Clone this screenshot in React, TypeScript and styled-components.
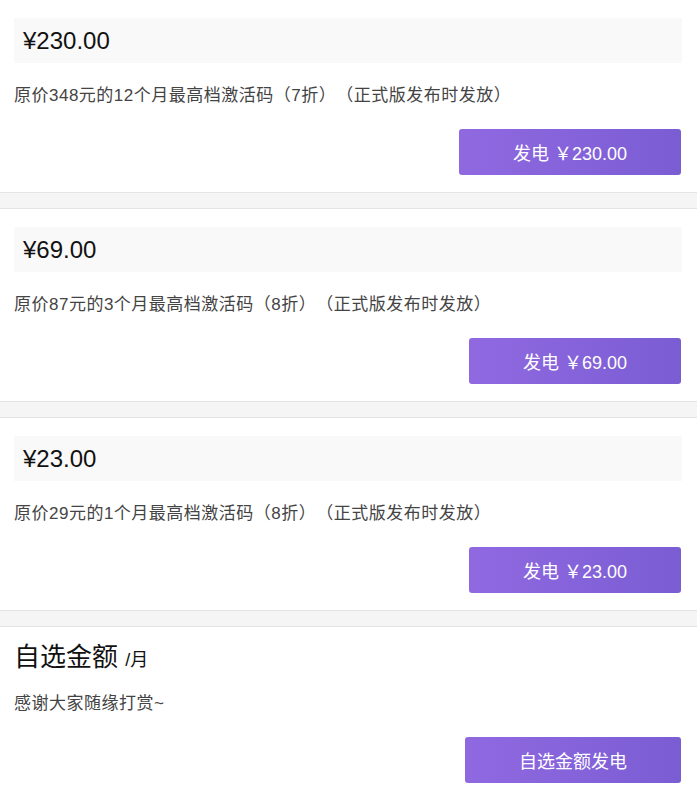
import React from 'react';
import styled, { createGlobalStyle } from 'styled-components';

interface Plan {
  price: string;
  desc: string;
}

const plans: Plan[] = [
  { price: '230.00', desc: '原价348元的12个月最高档激活码（7折）（正式版发布时发放）' },
  { price: '69.00', desc: '原价87元的3个月最高档激活码（8折）（正式版发布时发放）' },
  { price: '23.00', desc: '原价29元的1个月最高档激活码（8折）（正式版发布时发放）' }
];

const App = () => {
  return (
    <>
      <GlobalStyle />
      <Page>
        {plans.map((plan, key) => (
          <React.Fragment key={key}>
            <Card>
              <PriceBox>¥{plan.price}</PriceBox>
              <Desc>{plan.desc}</Desc>
              <ButtonRow>
                <PayButton>发电 ￥{plan.price}</PayButton>
              </ButtonRow>
            </Card>
            <Divider />
          </React.Fragment>
        ))}
        <Card>
          <Title>
            自选金额 <Unit>/月</Unit>
          </Title>
          <Desc>感谢大家随缘打赏~</Desc>
          <ButtonRow>
            <PayButton>自选金额发电</PayButton>
          </ButtonRow>
        </Card>
      </Page>
    </>
  );
};

export default App;

const GlobalStyle = createGlobalStyle`
  body {
    margin: 0;
    background: #fff;
    font-family: "Liberation Sans", "Noto Sans CJK SC", sans-serif;
  }
`;

const Page = styled.div`
  width: 697px;
`;

const Card = styled.section`
  padding: 18px 16px 17px 14px;
  background: #fff;
`;

const Divider = styled.div`
  height: 15px;
  background: #f5f5f5;
  border-top: 1px solid #e4e4e4;
  border-bottom: 1px solid #e4e4e4;
`;

const PriceBox = styled.div`
  height: 45px;
  margin-right: -1px;
  padding-left: 9px;
  display: flex;
  align-items: center;
  background: #f9f9f9;
  color: #111;
  font-size: 24px;
`;

const Title = styled.h2`
  margin: 0;
  height: 26px;
  line-height: 24px;
  font-size: 26px;
  font-weight: normal;
  color: #111;
`;

const Unit = styled.span`
  font-size: 18px;
`;

const Desc = styled.p`
  margin: 21px 0 0;
  line-height: 24px;
  font-size: 17px;
  letter-spacing: 0.5px;
  color: #444;
  text-spacing-trim: space-all;
`;

const ButtonRow = styled.div`
  margin-top: 21px;
  display: flex;
  justify-content: flex-end;
`;

const PayButton = styled.button`
  height: 46px;
  padding: 0 54px;
  border: none;
  border-radius: 3px;
  background: linear-gradient(90deg, #9069e1, #7b5dd3);
  color: #fff;
  font-family: inherit;
  font-size: 18px;
  cursor: pointer;
`;
